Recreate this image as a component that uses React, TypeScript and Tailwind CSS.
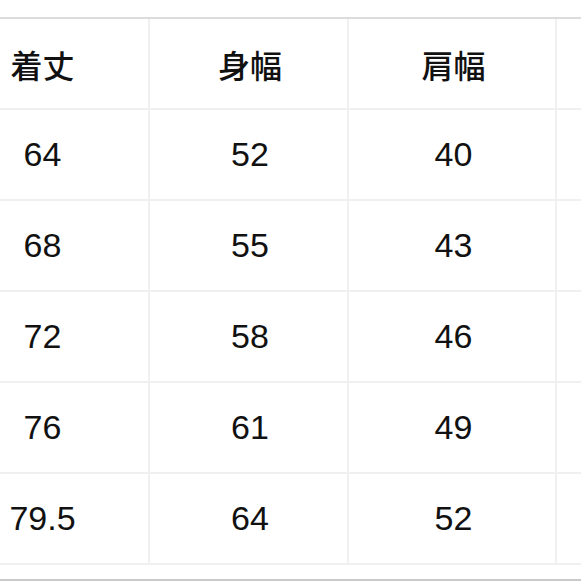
const header = ["着丈", "身幅", "肩幅", ""];
const rows = [
  ["64", "52", "40", ""],
  ["68", "55", "43", ""],
  ["72", "58", "46", ""],
  ["76", "61", "49", ""],
  ["79.5", "64", "52", ""],
];

export default function App() {
  return (
    <div className="w-[581px] h-[581px] overflow-hidden bg-white text-[#111111]">
      <div className="h-[17px]" />
      <div className="h-[2px] bg-[#dcdcdc]" />
      <div className="ml-[-66px] flex flex-col">
        <Row cells={header} head />
        {rows.map((r, i) => (
          <Row key={i} cells={r} />
        ))}
      </div>
      <div className="h-[14px]" />
      <div className="h-[2px] bg-[#c9c9c9]" />
    </div>
  );
}

function Row({ cells, head }: { cells: string[]; head?: boolean }) {
  return (
    <div className="grid h-[91px] grid-cols-[216px_199px_208px_200px] border-b-2 border-[#f0f0f0]">
      {cells.map((c, i) => (
        <div
          key={i}
          className={
            "flex items-center justify-center border-r-2 border-[#f0f0f0] pl-[3px] " +
            (head
              ? "text-[32px] font-medium font-['Noto_Sans_CJK_JP',sans-serif]"
              : "text-[34px] font-['Liberation_Sans',Arial,sans-serif]")
          }
        >
          {c}
        </div>
      ))}
    </div>
  );
}
